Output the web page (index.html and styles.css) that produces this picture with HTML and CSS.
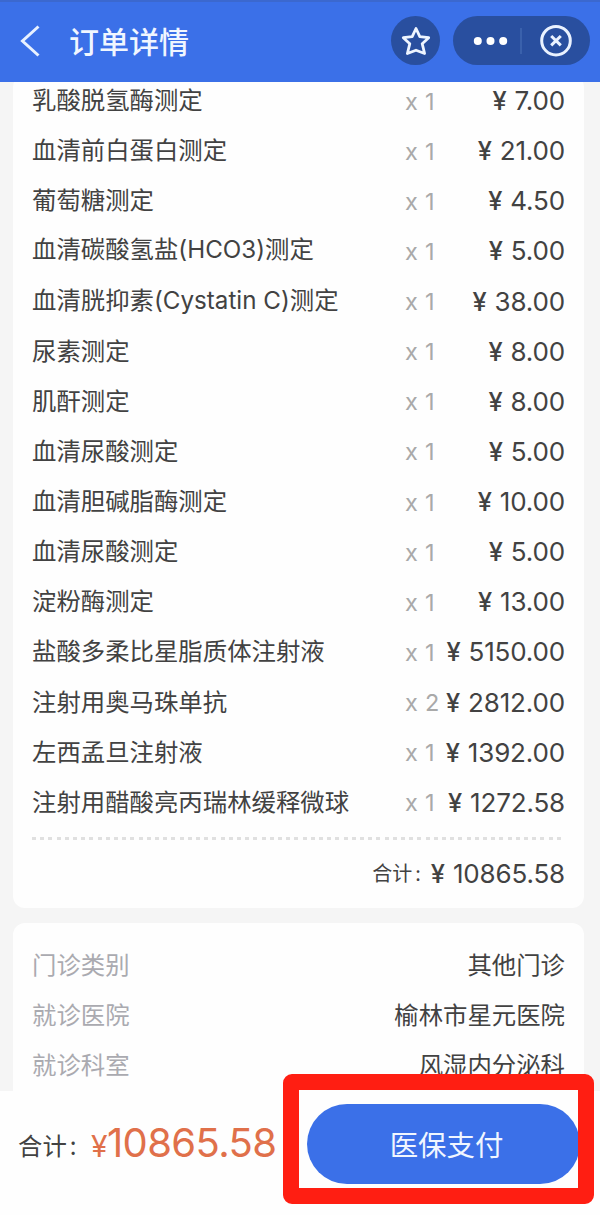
FILE: index.html
```html
<!DOCTYPE html>
<html lang="zh-CN">
<head>
<meta charset="utf-8">
<title>订单详情</title>
<link rel="stylesheet" href="styles.css">
</head>
<body>
<header class="header">
  <svg class="back" width="24" height="36" viewBox="0 0 24 36"><path d="M19.500 3.500L3.500 18L19.500 32.500"/></svg>
  <h1 class="title">订单详情</h1>
  <div class="star"><svg width="32" height="32" viewBox="0 0 32 32"><path d="M16 3.500L19.800 11.700L28.700 12.700L22.200 18.700L24.600 28.500L16 25.200L7.400 28.500L9.800 18.700L3.300 12.700L12.200 11.700Z"/></svg></div>
  <div class="capsule"><svg width="137" height="49" viewBox="0 0 137 49">
    <g fill="#fff"><circle cx="24.800" cy="25" r="4"/><circle cx="37.500" cy="25" r="4"/><circle cx="50.200" cy="25" r="4"/></g>
    <path d="M68 12V38" stroke="#4167b0" stroke-width="1.500"/>
    <g fill="none" stroke="#eaf2ff" stroke-width="3"><circle cx="103" cy="24.700" r="14.300"/><path d="M98.200 20L107.800 29.400M107.800 20L98.200 29.400"/></g>
  </svg></div>
</header>
<main class="content">
  <section class="card items">
    <div class="row"><span class="name">乳酸脱氢酶测定</span><span class="qty">x 1</span><span class="price"><i>¥</i>7.00</span></div>
    <div class="row"><span class="name">血清前白蛋白测定</span><span class="qty">x 1</span><span class="price"><i>¥</i>21.00</span></div>
    <div class="row"><span class="name">葡萄糖测定</span><span class="qty">x 1</span><span class="price"><i>¥</i>4.50</span></div>
    <div class="row"><span class="name">血清碳酸氢盐<span class="latin">(HCO3)</span>测定</span><span class="qty">x 1</span><span class="price"><i>¥</i>5.00</span></div>
    <div class="row"><span class="name">血清胱抑素<span class="latin">(Cystatin C)</span>测定</span><span class="qty">x 1</span><span class="price"><i>¥</i>38.00</span></div>
    <div class="row"><span class="name">尿素测定</span><span class="qty">x 1</span><span class="price"><i>¥</i>8.00</span></div>
    <div class="row"><span class="name">肌酐测定</span><span class="qty">x 1</span><span class="price"><i>¥</i>8.00</span></div>
    <div class="row"><span class="name">血清尿酸测定</span><span class="qty">x 1</span><span class="price"><i>¥</i>5.00</span></div>
    <div class="row"><span class="name">血清胆碱脂酶测定</span><span class="qty">x 1</span><span class="price"><i>¥</i>10.00</span></div>
    <div class="row"><span class="name">血清尿酸测定</span><span class="qty">x 1</span><span class="price"><i>¥</i>5.00</span></div>
    <div class="row"><span class="name">淀粉酶测定</span><span class="qty">x 1</span><span class="price"><i>¥</i>13.00</span></div>
    <div class="row"><span class="name">盐酸多柔比星脂质体注射液</span><span class="qty">x 1</span><span class="price"><i>¥</i>5150.00</span></div>
    <div class="row"><span class="name">注射用奥马珠单抗</span><span class="qty">x 2</span><span class="price"><i>¥</i>2812.00</span></div>
    <div class="row"><span class="name">左西孟旦注射液</span><span class="qty">x 1</span><span class="price"><i>¥</i>1392.00</span></div>
    <div class="row"><span class="name">注射用醋酸亮丙瑞林缓释微球</span><span class="qty">x 1</span><span class="price"><i>¥</i>1272.58</span></div>
    <div class="divider"></div>
    <div class="subtotal"><span class="sum-label">合计<b>:</b></span><span class="price"><i>¥</i>10865.58</span></div>
  </section>
  <section class="card info">
    <div class="field"><span class="key">门诊类别</span><span>其他门诊</span></div>
    <div class="field"><span class="key">就诊医院</span><span>榆林市星元医院</span></div>
    <div class="field"><span class="key">就诊科室</span><span>风湿内分泌科</span></div>
  </section>
</main>
<footer class="footer">
  <span class="total-label">合计<b>:</b></span>
  <span class="total"><i>¥</i>10865.58</span>
  <div class="pay-wrap"><button class="pay">医保支付</button><div class="frame"></div></div>
</footer>
</body>
</html>
```
FILE: styles.css
```css
* { box-sizing: border-box; }
body {
  margin: 0;
  width: 600px;
  height: 1215px;
  overflow: hidden;
  background: #fefefe;
  color: #424242;
  font-family: "Noto Sans CJK SC", sans-serif;
  font-size: 24.4px;
}
i { font-style: normal; }
b { margin-left: 3px; font-weight: 400; }
.header {
  display: flex;
  align-items: center;
  height: 82px;
  padding: 0 10px 3px 19px;
  background: #3b70e8;
  border-top: 2px solid #3b68cf;
}
.back { fill: none; stroke: #e8f1ff; stroke-width: 3; }
.title {
  margin: 0 auto 0 26px;
  padding-bottom: 2px;
  color: #f0f6ff;
  font-size: 30px;
  font-weight: 500;
  line-height: 44px;
}
.star {
  display: flex;
  align-items: center;
  justify-content: center;
  width: 49px;
  height: 49px;
  margin-right: 13px;
  border-radius: 50%;
  background: #294f9f;
}
.star svg { fill: none; stroke: #eef5ff; stroke-width: 2.8; stroke-linejoin: round; }
.capsule { height: 49px; border-radius: 25px; background: #294f9f; }
.capsule svg { display: block; }
.content {
  height: 1009px;
  padding: 0 16px 0 13px;
  overflow: hidden;
  background: #f5f5f5;
}
.card { background: #fefefe; border-radius: 12px; padding: 0 19px; }
.items { height: 833px; margin-top: -7px; }
.row {
  display: grid;
  grid-template-columns: 373px 1fr auto;
  align-items: center;
  height: 50.14px;
  line-height: 36px;
  white-space: nowrap;
}
.name { padding-bottom: 2px; }
.qty {
  width: 0;
  padding-top: 3px;
  color: #a9a9a9;
  font-family: Inter, sans-serif;
  font-size: 23.5px;
  letter-spacing: 0.3px;
}
.latin { font-family: Inter, sans-serif; font-size: 24.2px; }
.price {
  padding-top: 2px;
  font-family: Inter, sans-serif;
  font-size: 26px;
  letter-spacing: -0.15px;
  white-space: nowrap;
}
.price i { margin-right: 8px; font-size: 25.5px; font-weight: 500; }
.divider {
  height: 3px;
  margin-top: 10px;
  background: repeating-linear-gradient(90deg, #e0e0e0 0 4px, transparent 4px 8.2px);
}
.subtotal {
  display: flex;
  align-items: center;
  justify-content: flex-end;
  height: 66px;
  gap: 10px;
}
.sum-label { font-size: 20px; }
.info { height: 200px; margin-top: 15px; padding-top: 15px; }
.field {
  display: flex;
  align-items: center;
  justify-content: space-between;
  height: 50.2px;
}
.key { color: #aaaab0; }
.footer {
  display: flex;
  align-items: center;
  height: 124px;
  padding-left: 18px;
}
.total-label { width: 73px; white-space: nowrap; margin-top: -18px; }
.total {
  width: 216px;
  margin-top: -22px;
  color: #e0704a;
  font-family: Inter, sans-serif;
  font-size: 40px;
  letter-spacing: -0.6px;
  white-space: nowrap;
}
.total i { font-size: 30px; }
.pay-wrap { position: relative; height: 80px; margin-top: -18px; }
.pay {
  display: block;
  width: 273px;
  height: 80px;
  padding: 0 0 2px 6px;
  border: 0;
  border-radius: 40px;
  background: #3b70e8;
  color: #f0f6ff;
  font-family: "Noto Sans CJK SC", sans-serif;
  font-size: 28.4px;
}
.frame {
  position: absolute;
  left: -24px;
  top: -30px;
  width: 311px;
  height: 130px;
  border: 16px solid #ff1e12;
  border-radius: 9px;
}
```
